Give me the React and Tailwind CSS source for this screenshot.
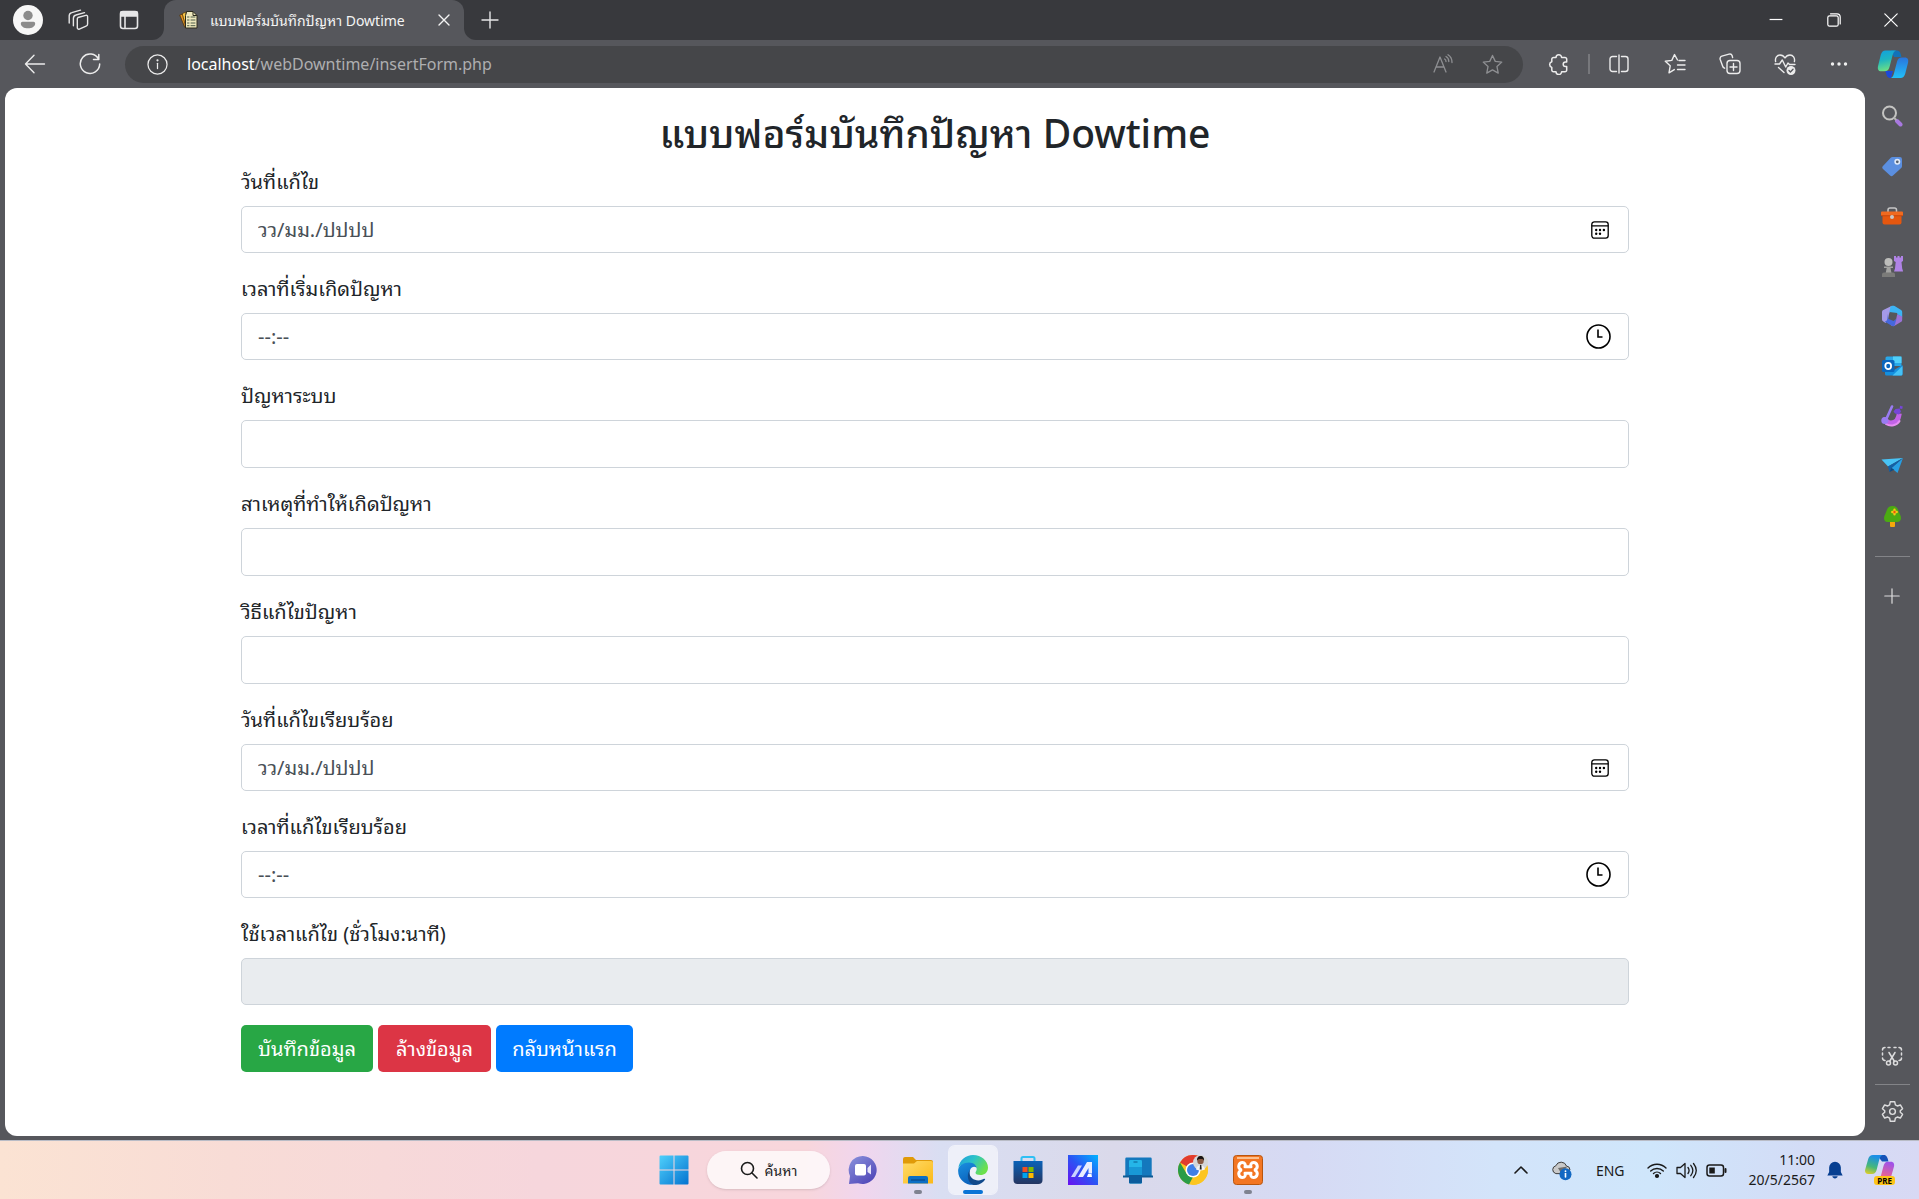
import React from "react";

const UI = "font-['Noto_Sans','Noto_Sans_Thai_Looped','Loma','Noto_Sans_Thai','Liberation_Sans',sans-serif]";

function Svg({ size = 24, box = "0 0 24 24", className = "", children, sw = 1.3 }) {
  return (
    <svg
      width={size}
      height={size}
      viewBox={box}
      fill="none"
      stroke="currentColor"
      strokeWidth={sw}
      strokeLinecap="round"
      strokeLinejoin="round"
      aria-hidden="true"
      className={"shrink-0 " + className}
    >
      {children}
    </svg>
  );
}

function IconButton({ label, className = "", children }) {
  return (
    <button type="button" aria-label={label} className={"flex shrink-0 items-center justify-center " + className}>
      {children}
    </button>
  );
}

/* ---------- title bar ---------- */

function NotesIcon() {
  return (
    <Svg size={20} box="0 0 20 20" sw={1}>
      <path d="M1 5 4 4l4 12-2 1z" fill="#e8961e" stroke="#5a3c10" strokeWidth=".8" />
      <path d="M3.500 3.500 7 2l2 13-2 1z" fill="#f7c84a" stroke="#5a3c10" strokeWidth=".8" />
      <path d="M8 1.500h6l4 4V18H6.500V6z" fill="#efe9bd" stroke="#2c2a1c" />
      <path d="M8.500 7h1.500M12 7h4M8.500 10h1.500M12 10h4M8.500 13h1.500M12 13h4M8.500 15.700h1.500M12 15.700h4" stroke="#4c5a48" />
      <path d="M14 2v3.500h3.500" stroke="#2c2a1c" />
    </Svg>
  );
}

function TitleBar() {
  return (
    <header className="flex h-10 items-stretch bg-[#38393d] text-[#e6e6e7]">
      <div className="flex w-[164px] shrink-0 items-center bg-[#56575c]">
        <div className="flex h-10 w-full items-center rounded-br-xl bg-[#38393d] pl-[13px]">
          <IconButton label="โปรไฟล์">
            <Svg size={30} box="0 0 30 30">
              <circle cx="15" cy="15" r="15" fill="#f7f7f7" stroke="none" />
              <circle cx="15" cy="10.500" r="4.700" fill="#8c8c8c" stroke="none" />
              <path d="M9.500 16.700h11a1.700 1.700 0 0 1 1.700 1.700c0 3-3.200 4.900-7.200 4.900s-7.200-1.900-7.200-4.900a1.700 1.700 0 0 1 1.700-1.700z" fill="#8c8c8c" stroke="none" />
            </Svg>
          </IconButton>
          <IconButton label="พื้นที่ทำงาน" className="ml-6">
            <Svg size={22} box="0 0 22 22" sw={1.4}>
              <path d="m11 8.500 7.800-2.200a1.400 1.400 0 0 1 1.800 1.400v7.300a2.200 2.200 0 0 1-1.500 2.100l-6.800 3a1.400 1.400 0 0 1-2-1.300v-8.200a2.200 2.200 0 0 1 .7-2.100z" />
              <path d="M17.500 3.600 9 6a3.400 3.400 0 0 0-2.600 3.200v7.500" />
              <path d="M13.500 1.200 4.800 3.600a3.400 3.400 0 0 0-2.600 3.200V14" />
            </Svg>
          </IconButton>
          <IconButton label="เมนูการทำงานของแท็บ" className="ml-[30px]">
            <Svg size={20} box="0 0 20 20" sw={1.6}>
              <rect x="1.500" y="1.500" width="17" height="17" rx="2.500" />
              <path d="M2 2h16v4H2z" fill="currentColor" />
              <path d="M6 6v12" />
            </Svg>
          </IconButton>
        </div>
      </div>
      <div className="flex w-[300px] shrink-0 bg-[#38393d]">
        <div className="flex w-full items-center rounded-t-xl bg-[#56575c] pr-[12px] pl-[15px] text-[#f4f4f4]">
          <NotesIcon />
          <span className="ml-[11px] flex-1 text-[14px] whitespace-nowrap">แบบฟอร์มบันทึกปัญหา Dowtime</span>
          <IconButton label="ปิดแท็บ">
            <Svg size={16} box="0 0 16 16" sw={1.400}>
              <path d="m3 3 10 10M13 3 3 13" />
            </Svg>
          </IconButton>
        </div>
      </div>
      <div className="flex flex-1 bg-[#56575c]">
        <div className="flex flex-1 items-center rounded-bl-xl bg-[#38393d] pl-[17px]">
          <IconButton label="แท็บใหม่">
            <Svg size={18} box="0 0 18 18" sw={1.4}>
              <path d="M9 1v16M1 9h16" />
            </Svg>
          </IconButton>
          <div className="ml-auto flex text-white">
            <IconButton label="ย่อ" className="w-[58px]">
              <Svg size={14} box="0 0 14 14" sw={1.2}>
                <path d="M.6 6.500h12.800" strokeLinecap="butt" />
              </Svg>
            </IconButton>
            <IconButton label="คืนค่า" className="w-[57px]">
              <Svg size={14} box="0 0 14 14" sw={1.2}>
                <rect x=".8" y="2.800" width="10.400" height="10.400" rx="1.800" />
                <path d="M3.500.8H10A3.200 3.200 0 0 1 13.200 4v7" />
              </Svg>
            </IconButton>
            <IconButton label="ปิด" className="w-[57px]">
              <Svg size={14} box="0 0 14 14" sw={1.2}>
                <path d="m.8.8 12.400 12.400M13.200.8.8 13.200" />
              </Svg>
            </IconButton>
          </div>
        </div>
      </div>
    </header>
  );
}

/* ---------- toolbar ---------- */

function CopilotIcon() {
  return (
    <svg width="32" height="28" viewBox="0 0 32 28" aria-hidden="true">
      <defs>
        <linearGradient id="cpA" x1="0" y1="0" x2="0.200" y2="1">
          <stop offset="0" stopColor="#11a0e0" />
          <stop offset=".5" stopColor="#1fb5c0" />
          <stop offset="1" stopColor="#6ade86" />
        </linearGradient>
        <linearGradient id="cpB" x1="0" y1="0" x2="0" y2="1">
          <stop offset="0" stopColor="#2a74dc" />
          <stop offset="1" stopColor="#22c0f8" />
        </linearGradient>
      </defs>
      <path d="M14 0.500h6c2.600 0 3.800 2.800 4.400 6.500H17z" fill="#1272b8" />
      <path d="M8 21h8l-2 7c-3.500 0-4.200-2-4.800-4.300C8.800 22.100 8.600 21.500 8 21z" fill="#1c49d8" />
      <path d="M8.500.5H19c-2 .7-2.800 2.400-3.400 4.800L12.500 17c-.9 3-2.200 4.300-5 4.300H4.200C1.300 21.300.4 19 1 16.200L3.800 4.800C4.700 2 6.200.5 8.500.5z" fill="url(#cpA)" />
      <path d="M23.500 28H13.800c2-.7 2.500-2.400 3.200-4.800l3-11.500c.9-3 2.200-4.300 5-4.300h2.800c3 0 3.900 2.300 3.300 5l-2.900 11.300c-.8 2.800-2.300 4.300-4.700 4.300z" fill="url(#cpB)" />
    </svg>
  );
}

function Toolbar() {
  return (
    <nav className="flex h-12 items-center bg-[#56575c] text-[#ececec]">
      <IconButton label="ย้อนกลับ" className="ml-[12px] w-[46px]">
        <Svg size={22} box="0 0 22 22" sw={1.4}>
          <path d="M20.500 11H1.500M10 2.200 1.500 11l8.500 8.800" />
        </Svg>
      </IconButton>
      <IconButton label="รีเฟรช" className="mr-[12px] ml-[9px] w-[46px]">
        <Svg size={22} box="0 0 22 22" sw={1.5}>
          <path d="M19.600 6.200A9.700 9.700 0 1 0 20.700 11M19.800 1.400v5.200h-5.300" />
        </Svg>
      </IconButton>
      <div className="flex h-[37px] flex-1 items-center rounded-full bg-[#454649] pr-[20px] pl-[22px]">
        <Svg size={21} box="0 0 22 22" sw={1.3}>
          <circle cx="11" cy="11" r="10" />
          <path d="M11 9.800v5.500" />
          <circle cx="11" cy="6.600" r=".5" fill="currentColor" />
        </Svg>
        <a href="#address" className="ml-[19px] flex-1 text-[16px] text-[#aeaeb0]">
          <span className="text-white">localhost</span>/webDowntime/insertForm.php
        </a>
        <IconButton label="อ่านออกเสียง" className="mr-[29px] text-[#8e8f92]">
          <Svg size={20} box="0 0 20 20" sw={1.3}>
            <path d="M1 18 7 3l6 15M3 13h8" />
            <path d="M13 2.500c2 1.200 2.800 3 2.800 5M15 .8c3 1.800 4 4.700 4 7.700M11.600 5c1 .6 1.400 1.500 1.400 2.600" />
          </Svg>
        </IconButton>
        <IconButton label="เพิ่มในรายการโปรด" className="text-[#8e8f92]">
          <Svg size={21} box="0 0 22 22" sw={1.4}>
            <path d="m11 1.500 2.900 6.200 6.800.8-5 4.700 1.300 6.800-6-3.300L5 20l1.300-6.800-5-4.700 6.800-.8z" />
          </Svg>
        </IconButton>
      </div>
      <div className="flex items-center">
        <IconButton label="ส่วนขยาย" className="ml-[8px] w-[56px]">
          <Svg size={22} box="0 0 22 22" sw={1.5}>
            <path d="M8 4.500a2.800 2.800 0 0 1 5.600 0H17a1.700 1.700 0 0 1 1.700 1.700V9h-1.200a2.200 2.200 0 0 0 0 4.600h1.200V17a1.700 1.700 0 0 1-1.700 1.700h-3.400a2.800 2.800 0 0 1-5.600 0H5.500A1.700 1.700 0 0 1 3.800 17v-2.600a2.900 2.900 0 0 1 0-5.600V6.200a1.700 1.700 0 0 1 1.700-1.700z" />
          </Svg>
        </IconButton>
        <span className="mx-[1px] h-5 w-[2px] bg-[#77787c]" />
        <IconButton label="แยกหน้าจอ" className="w-[56px]">
          <Svg size={20} box="0 0 20 20" sw={1.4}>
            <path d="M7.500 2.500H3.500A2.500 2.500 0 0 0 1 5v10a2.500 2.500 0 0 0 2.500 2.500h4M12.500 2.500h4A2.500 2.500 0 0 1 19 5v10a2.500 2.500 0 0 1-2.500 2.500h-4M10 1v18" />
          </Svg>
        </IconButton>
        <IconButton label="รายการโปรด" className="w-[55px]">
          <Svg size={22} box="0 0 22 22" sw={1.4}>
            <path d="M13.500 7 10.500 1.500 7.800 7.400l-6.500.9 4.900 4.500L5 19.800l5.300-3.200M15 7.500h6M13.500 12h7.500M13.500 16.500h7.500" />
          </Svg>
        </IconButton>
        <IconButton label="คอลเลกชัน" className="w-[55px]">
          <Svg size={22} box="0 0 22 22" sw={1.4}>
            <rect x="8" y="7.500" width="13" height="13" rx="3" />
            <path d="M14.500 10.500v7M11 14h7M5.600 15.200a3 3 0 0 1-2-2.200L1.200 6.500a2.600 2.600 0 0 1 1.700-3.300L10 1.200a2.600 2.600 0 0 1 3.200 1.600l.4 1.700" />
          </Svg>
        </IconButton>
        <IconButton label="สิ่งจำเป็นของเบราว์เซอร์" className="w-[55px]">
          <Svg size={22} box="0 0 22 22" sw={1.4}>
            <path d="M1.600 8.500C.8 5 3 2 6 2c2.200 0 3.800 1 5 3 1.200-2 2.800-3 5-3 3 0 5.200 3 4.400 6.500M1 11h4.500l2.800-4 3.400 7 2.300-4 1.500 1.500H21M4.500 14.500l5.500 5" />
            <circle cx="17" cy="17.500" r="4.500" fill="currentColor" stroke="none" />
            <path d="m15 17.600 1.400 1.300 2.600-2.700" stroke="#56575c" />
          </Svg>
        </IconButton>
        <IconButton label="การตั้งค่าและอื่นๆ" className="w-[54px]">
          <svg width="18" height="6" viewBox="0 0 18 6" fill="#f0f0f0" aria-hidden="true">
            <circle cx="2.500" cy="3" r="1.700" />
            <circle cx="9" cy="3" r="1.700" />
            <circle cx="15.500" cy="3" r="1.700" />
          </svg>
        </IconButton>
        <IconButton label="Copilot" className="w-[53px]">
          <CopilotIcon />
        </IconButton>
      </div>
    </nav>
  );
}

/* ---------- form ---------- */

function CalendarIcon() {
  return (
    <Svg size={18} box="0 0 18 18" className="mr-[3px]" sw={1.3}>
      <rect x=".8" y=".8" width="16.400" height="16.400" rx="2.600" />
      <path d="M1 4.800h16" />
      <g fill="currentColor" stroke="none">
        <circle cx="5.200" cy="9" r="1.200" />
        <circle cx="9" cy="9" r="1.200" />
        <circle cx="12.900" cy="9" r="1.200" />
        <circle cx="5.200" cy="12.700" r="1.200" />
        <circle cx="9" cy="12.700" r="1.200" />
      </g>
    </Svg>
  );
}

function ClockIcon() {
  return (
    <Svg size={25} box="0 0 25 25" className="mr-[1px]" sw={1.6}>
      <circle cx="12.500" cy="12.500" r="11.500" />
      <path d="M12 5.500V13h4.500" strokeLinecap="butt" strokeLinejoin="miter" />
    </Svg>
  );
}

const FIELDS = [
  { id: "fixDate", label: "วันที่แก้ไข", kind: "date" },
  { id: "startTime", label: "เวลาที่เริ่มเกิดปัญหา", kind: "time" },
  { id: "problem", label: "ปัญหาระบบ", kind: "text" },
  { id: "cause", label: "สาเหตุที่ทำให้เกิดปัญหา", kind: "text" },
  { id: "solution", label: "วิธีแก้ไขปัญหา", kind: "text" },
  { id: "doneDate", label: "วันที่แก้ไขเรียบร้อย", kind: "date" },
  { id: "doneTime", label: "เวลาที่แก้ไขเรียบร้อย", kind: "time" },
  { id: "duration", label: "ใช้เวลาแก้ไข (ชั่วโมง:นาที)", kind: "readonly" },
];

const BOX = {
  date: "h-[47px] bg-white",
  time: "h-[47px] bg-white",
  text: "h-12 bg-white",
  readonly: "h-[47px] bg-[#e9ecef]",
};

const HINT = { date: "วว/มม./ปปปป", time: "--:--" };

function Field({ id, label, kind }) {
  return (
    <div className="mb-5">
      <label htmlFor={id} className="mb-[10px] block h-[30px] text-[20px] leading-[32px] text-[#212529]">
        {label}
      </label>
      <div className={"flex items-center rounded-[5px] border border-[#ced4da] pr-4 pl-4 text-black " + BOX[kind]}>
        <input
          id={id}
          type="text"
          placeholder={HINT[kind]}
          readOnly={kind === "readonly"}
          className="h-full min-w-0 flex-1 bg-transparent text-[20px] text-[#495057] outline-none placeholder:text-[#495057]"
        />
        {kind === "date" && (
          <IconButton label={"เลือกวันที่: " + label}>
            <CalendarIcon />
          </IconButton>
        )}
        {kind === "time" && (
          <IconButton label={"เลือกเวลา: " + label}>
            <ClockIcon />
          </IconButton>
        )}
      </div>
    </div>
  );
}

function DowntimeForm() {
  return (
    <main className="flex-1 rounded-xl bg-white pt-[20px] pb-[40px]">
      <form className="mx-auto w-full max-w-[1388px]" onSubmit={(e) => e.preventDefault()}>
        <h1 className="mb-[10px] h-12 text-center text-[39px] leading-[50px] font-medium text-[#212529]">
          แบบฟอร์มบันทึกปัญหา Dowtime
        </h1>
        {FIELDS.map((f) => (
          <Field key={f.id} {...f} />
        ))}
        <div className="flex gap-[5px] text-[20px] text-white">
          <button type="submit" className="h-[47px] w-[132px] rounded-[5px] bg-[#28a745]">
            บันทึกข้อมูล
          </button>
          <button type="reset" className="h-[47px] w-[113px] rounded-[5px] bg-[#dc3545]">
            ล้างข้อมูล
          </button>
          <a href="#home" className="flex h-[47px] w-[137px] items-center justify-center rounded-[5px] bg-[#007bff]">
            กลับหน้าแรก
          </a>
        </div>
      </form>
    </main>
  );
}

/* ---------- side bar ---------- */

const SIDE = [
  [
    "ค้นหา",
    <>
      <circle cx="8.500" cy="8" r="6.500" stroke="#c4c4c2" strokeWidth="2" />
      <path d="m16 16 3.500 3.500" stroke="#a878e0" strokeWidth="4" />
      <path d="m13.300 13 1.500 1.500" stroke="#b4b4b4" strokeWidth="2" />
    </>,
  ],
  [
    "ช้อปปิ้ง",
    <>
      <path d="M11.500 2h7.300A2.200 2.200 0 0 1 21 4.200v7a2.500 2.500 0 0 1-.8 1.800L12 20.500a2 2 0 0 1-2.900 0L2 14a2 2 0 0 1 0-2.900l7.700-8.300A2.500 2.500 0 0 1 11.500 2z" fill="#5b8fe0" stroke="none" />
      <circle cx="16.300" cy="6.800" r="2.200" stroke="#dfe9f8" strokeWidth="1.600" fill="#55606e" />
    </>,
  ],
  [
    "เครื่องมือ",
    <>
      <path d="M7 7V5a2 2 0 0 1 2-2h4.500a2 2 0 0 1 2 2v2" stroke="#c6c6c6" strokeWidth="1.500" />
      <path d="M1.500 9h19v8.500a2 2 0 0 1-2 2h-15a2 2 0 0 1-2-2z" fill="#e5570f" stroke="none" />
      <path d="M1 6.500h20a1 1 0 0 1 1 1V11H0V7.500a1 1 0 0 1 1-1z" fill="#f06a20" stroke="none" />
      <path d="M0 10.700h22" stroke="#b53a06" strokeWidth=".7" />
      <circle cx="11" cy="12" r="2" fill="#c8c8c8" stroke="none" />
    </>,
  ],
  [
    "เกม",
    <>
      <path d="M13 1h2v1.500h1.500V1h2v1.500H20V1h2v5l-1.500 1 .7 6.500 1 3H13l1-3 .7-6.500L13 6z" fill="#b083e6" stroke="none" />
      <circle cx="7.500" cy="7" r="4" fill="#bdbdbb" stroke="none" />
      <path d="M3 11.500h9v1.500H9.500l1 5H4.700l1-5H3z" fill="#a3a3a1" stroke="none" />
      <path d="M1 19.500a2 2 0 0 1 2-2h9a2 2 0 0 1 2 2V22H1z" fill="#7b7b79" stroke="none" />
    </>,
  ],
  [
    "Microsoft 365",
    <>
      <path d="M11 .8 8 9 7 14.500 4.500 18 2.300 16.600A2.500 2.500 0 0 1 1 14.500V7.300c0-1 .5-1.800 1.300-2.200z" fill="#a59ae8" stroke="none" />
      <path d="m9.500 1.600 1.200-.6c1-.5 2-.4 2.900.1l6.100 3.700c1 .6 1.500 1.400 1.500 2.500v5l-5-3V8L8.500 7z" fill="#3cb4f4" stroke="none" />
      <path d="M21.200 11.500v3.200c0 1-.5 1.900-1.400 2.400l-6.200 3.700c-1 .6-2 .6-3 0l-.8-.5 5.400-6.300 1-4.700z" fill="#9a72d8" stroke="none" />
      <path d="m7 8.500.2 5.300 5.300 2.200 3-2-2 6.800c-1 .5-2 .4-2.900-.1l-7-4.200c1.500 0 2.500-1 2.700-2.500z" fill="#4668dc" stroke="none" />
    </>,
  ],
  [
    "Outlook",
    <>
      <path d="M6 1.500h13a1.500 1.500 0 0 1 1.500 1.500v8H4.500V3A1.500 1.500 0 0 1 6 1.500z" fill="#28a8ea" stroke="none" />
      <path d="M12 1.500h8.500V8H12z" fill="#50d0fa" stroke="none" />
      <path d="m4 10 9 5 8.500-5v9a1.500 1.500 0 0 1-1.500 1.500H5.500A1.500 1.500 0 0 1 4 19z" fill="#1490df" stroke="none" />
      <path d="m21.500 11-10 9.500H20a1.500 1.500 0 0 0 1.500-1.500z" fill="#45c2f6" stroke="none" />
      <rect x="1" y="5" width="12.500" height="12" rx="1.500" fill="#0a66bd" stroke="none" />
      <ellipse cx="7.200" cy="11" rx="2.900" ry="3.100" stroke="#fff" strokeWidth="1.800" />
    </>,
  ],
  [
    "Designer",
    <>
      <path d="M4 12.500c.5 4 3 5.500 6 5.500 4.500 0 7.500-3 8.300-9.500" stroke="#c263e8" strokeWidth="5" strokeLinecap="butt" />
      <path d="M5 19c4.500 3 11 1.500 13.500-3" stroke="#e78df2" strokeWidth="2" />
      <path d="m11 1.500-5 11" stroke="#9a7cf2" strokeWidth="2.600" />
      <circle cx="3.800" cy="15.500" r="3.500" fill="#9a7cf2" stroke="none" />
      <path d="m14.500 4 4-.5 1.500 3-2 3-4-1-1.500-2zM19 .8l2.800.7-.6 2.500-2.500-.5z" fill="#7646d8" stroke="none" />
    </>,
  ],
  [
    "Drop",
    <>
      <path d="M.5 4.500 22 3 7 11.500z" fill="#48c4f6" stroke="none" />
      <path d="m22 3-5.500 15-6-5z" fill="#279fe4" stroke="none" />
      <path d="m22 3-15 8.500L8.500 17l2-4z" fill="#1160a8" stroke="none" />
      <path d="m8.500 17 2-4 2.700 1.800z" fill="#0b4a86" stroke="none" />
    </>,
  ],
  [
    "ต้นไม้",
    <>
      <path d="M9 15h5v6a1 1 0 0 1-1 1h-3a1 1 0 0 1-1-1z" fill="#f5a80c" stroke="none" />
      <path d="M11.500 1c3.500 0 5 2 6 5s2.500 4.500 2.500 7-1.500 4-4 4H6.500c-2.500 0-3.500-2-3.500-4s1.500-4 2.500-7 2.500-5 6-5z" fill="#4bab12" stroke="none" />
      <path d="M13.500 4.800v4.400M11.300 7h4.400" stroke="#f7c815" strokeWidth="2.400" />
      <circle cx="13.500" cy="7" r="1.200" fill="#e8530e" stroke="none" />
    </>,
  ],
];

function SideBar() {
  return (
    <aside className="flex w-[54px] shrink-0 flex-col items-center bg-[#56575c] pt-[3px] text-[#dcdcdd]">
      {SIDE.map(([name, art]) => (
        <IconButton key={name} label={name} className="h-[50px] w-full">
          <Svg size={22} box="0 0 22 22">
            {art}
          </Svg>
        </IconButton>
      ))}
      <span className="mt-[15px] h-px w-[35px] bg-[#838488]" />
      <IconButton label="ปรับแต่งแถบด้านข้าง" className="mt-[14px] h-[50px] w-full">
        <Svg size={16} box="0 0 16 16" sw={1.2}>
          <path d="M8 .8v14.400M.8 8h14.400" />
        </Svg>
      </IconButton>
      <IconButton label="สกรีนช็อต" className="mt-auto h-[50px] w-full">
        <Svg size={22} box="0 0 22 22" sw={1.5}>
          <path d="M4 15.500c-1.700 0-2.500-1-2.500-2.500M1.500 10V8M1.500 5c0-1.500 1-2.500 2.500-2.500M7 2.500h2M13 2.500h2M18 2.500c1.500 0 2.500 1 2.500 2.500M20.500 8v2M20.500 13c0 1.500-1 2.500-2.500 2.500" />
          <path d="m8 7.500 5.500 9M14 7.500l-5.500 9" />
          <circle cx="7.500" cy="18" r="2" />
          <circle cx="14.500" cy="18" r="2" />
        </Svg>
      </IconButton>
      <span className="mt-[3px] h-px w-[35px] bg-[#838488]" />
      <IconButton label="การตั้งค่า" className="mt-px h-[50px] w-full">
        <Svg size={23} box="0 0 24 24" sw={1.5}>
          <path d="M9.700 1.800h4.600l.7 3.300 2 1.100 3.200-1 2.300 3.900-2.400 2.200v1.400l2.400 2.200-2.300 3.900-3.200-1-2 1.100-.7 3.300H9.700L9 18.900l-2-1.100-3.200 1-2.300-3.900 2.400-2.200v-1.400L1.500 9.100l2.300-3.900 3.200 1 2-1.100z" />
          <circle cx="12" cy="12" r="3" />
        </Svg>
      </IconButton>
    </aside>
  );
}

/* ---------- task bar ---------- */

function App30({ children }) {
  return (
    <svg width="30" height="30" viewBox="0 0 30 30" fill="none" aria-hidden="true">
      {children}
    </svg>
  );
}

function TaskButton({ label, state, children }) {
  return (
    <button type="button" aria-label={label} className="flex w-[55px] justify-center">
      <span
        className={
          "relative flex h-12 w-12 items-center justify-center rounded-md " +
          (state === "active" ? "bg-white/55 ring-1 ring-white/60" : "")
        }
      >
        {children}
        {state === "active" && <span className="absolute bottom-0 h-1 w-5 rounded-full bg-[#0a74d6]" />}
        {state === "open" && <span className="absolute bottom-0 h-1 w-2 rounded-full bg-[#7f8290]" />}
      </span>
    </button>
  );
}

function StartIcon() {
  return (
    <App30>
      <defs>
        <linearGradient id="win" x1="0" y1="0" x2="1" y2="1">
          <stop offset="0" stopColor="#4fd0fb" />
          <stop offset="1" stopColor="#0473d0" />
        </linearGradient>
      </defs>
      <path d="M1.500.5H14.500V14.500H.5V1.500a1 1 0 0 1 1-1zM15.500.5h13a1 1 0 0 1 1 1v13h-14zM.5 15.500h14v14h-13a1 1 0 0 1-1-1zM15.500 15.500h14v13a1 1 0 0 1-1 1h-13z" fill="url(#win)" />
    </App30>
  );
}

function ChatIcon() {
  return (
    <App30>
      <defs>
        <linearGradient id="chat" x1="0" y1="0" x2="0.800" y2="1">
          <stop offset="0" stopColor="#8b93dc" />
          <stop offset="1" stopColor="#4f46b8" />
        </linearGradient>
      </defs>
      <path d="M15 1a14 14 0 1 1-5 27.200L1 29l1-8A14 14 0 0 1 15 1z" fill="url(#chat)" />
      <rect x="7" y="9" width="11" height="11.500" rx="2" fill="#fff" />
      <path d="m19.500 13 3.500-3.500v10L19.500 17z" fill="#e6e4fa" />
    </App30>
  );
}

function FolderIcon() {
  return (
    <App30>
      <defs>
        <linearGradient id="fold" x1="0" y1="0" x2="1" y2="1">
          <stop offset="0" stopColor="#ffdb6a" />
          <stop offset="1" stopColor="#fbb917" />
        </linearGradient>
      </defs>
      <path d="M0 4a2 2 0 0 1 2-2h8l3 3h15a2 2 0 0 1 2 2v6H0z" fill="#e09a08" />
      <path d="M0 8.500h11L14 6h14a2 2 0 0 1 2 2v20.500H0z" fill="url(#fold)" />
      <path d="M5 28.500V23a2 2 0 0 1 2-2h16a2 2 0 0 1 2 2v5.500z" fill="#0c6fc4" />
      <path d="M8 25h14" stroke="#0a4f95" strokeWidth="1.500" />
    </App30>
  );
}

function EdgeIcon() {
  return (
    <App30>
      <defs>
        <linearGradient id="edA" x1="0" y1="0" x2="1" y2="0.500">
          <stop offset="0" stopColor="#1f9be0" />
          <stop offset=".5" stopColor="#2cc3c8" />
          <stop offset="1" stopColor="#6ce04c" />
        </linearGradient>
        <linearGradient id="edB" x1="0" y1="0" x2="0.400" y2="1">
          <stop offset="0" stopColor="#1a90e0" />
          <stop offset="1" stopColor="#0b62bc" />
        </linearGradient>
      </defs>
      <path d="M.3 13C1.500 5 8 0 15 0c8.500 0 15 6 15 12.500 0 5-3.500 7.500-7.500 7.500-3 0-5-1-5-2.300 0-1 1.200-1.500 1.200-3.700 0-3-3-5.500-7-5.500C6.500 8.500 2 10 .3 13z" fill="url(#edA)" />
      <path d="M.2 14.500C1 10.500 5.500 7.500 11 7.500c4.500 0 7.700 2.800 7.700 6 0-2-5-3-6.700 1.500-2 6 3 13.500 6 14.500C9 31.500-.8 25 .2 14.500z" fill="url(#edB)" />
      <path d="M12.300 14.500c-3 5.500 2.200 11 8 11 2.500 0 4.500-1 5.700-1.700.7-.4 1.500.3 1 1C24.500 28.500 20 30.500 15.500 30 9.500 28 8 19 12.300 14.500z" fill="#114a8b" />
    </App30>
  );
}

function StoreIcon() {
  return (
    <App30>
      <defs>
        <linearGradient id="store" x1="0" y1="0" x2="0" y2="1">
          <stop offset="0" stopColor="#0a62b8" />
          <stop offset="1" stopColor="#253560" />
        </linearGradient>
      </defs>
      <path d="M8.500 7V3.500a1.500 1.500 0 0 1 1.500-1.500h10a1.500 1.500 0 0 1 1.500 1.500V7" stroke="#2fc0f4" strokeWidth="2" />
      <path d="M.5 6h29v19a4 4 0 0 1-4 4h-21a4 4 0 0 1-4-4z" fill="url(#store)" />
      <path d="M9.500 12h5v5h-5z" fill="#f25022" />
      <path d="M15.500 12h5v5h-5z" fill="#7fba00" />
      <path d="M9.500 18h5v5h-5z" fill="#00a4ef" />
      <path d="M15.500 18h5v5h-5z" fill="#ffb900" />
    </App30>
  );
}

function MyAsusIcon() {
  return (
    <App30>
      <defs>
        <linearGradient id="asus" x1="1" y1="0" x2="0" y2="1">
          <stop offset="0" stopColor="#00b4ff" />
          <stop offset=".5" stopColor="#2b54f4" />
          <stop offset="1" stopColor="#6a10f0" />
        </linearGradient>
      </defs>
      <path d="M0 0h30v30H0z" fill="url(#asus)" />
      <path d="M3 22 10 10.500h4L7 22z" fill="#c9d2ff" />
      <path d="m10 22 9-15h5v11.500h-3.500V13L15 22z" fill="#eaeeff" />
      <path d="M20 19h3.500l.5 3h-5z" fill="#fff" />
    </App30>
  );
}

function PhoneLinkIcon() {
  return (
    <App30>
      <path d="M3.500 2.500h24a1.200 1.200 0 0 1 1.200 1.200V21H2.300V3.700a1.200 1.200 0 0 1 1.200-1.200z" fill="#1478bd" />
      <path d="M0 20.500h30v2H0z" fill="#0d5a94" />
      <rect x="6" y="5" width="13" height="23.500" rx="1.200" fill="#25b5e8" />
      <path d="M6 20h13v7.300a1.200 1.200 0 0 1-1.200 1.200H7.200A1.200 1.200 0 0 1 6 27.300z" fill="#0c5c9c" />
      <path d="M6 12h13v8H6z" fill="#1898d6" />
      <path d="M10.500 7h4" stroke="#0b5c90" />
    </App30>
  );
}

function ChromeIcon() {
  return (
    <App30>
      <circle cx="15" cy="15" r="15" fill="#fcc520" />
      <path d="M15 15 2 7.500A15 15 0 0 1 28 7.500H15z" fill="#e23b2e" />
      <path d="M2 7.500 8.500 18.500 15 22l-4 7.500A15 15 0 0 1 2 7.500z" fill="#2a9c48" />
      <path d="M15 30 21.500 18.500 21 8h7.200A15 15 0 0 1 15 30z" fill="#fcc520" />
      <circle cx="15" cy="15" r="7.500" fill="#fff" />
      <circle cx="15" cy="15" r="6" fill="#3f7fe8" />
      <circle cx="22.500" cy="7.500" r="7.500" fill="#d4d6d8" />
      <path d="M18 14.500c.5-3 2-4 4.500-4s4 1 4.500 4c-3 1.300-6 1.300-9 0z" fill="#f2f2f2" />
      <circle cx="22.500" cy="6" r="3.200" fill="#8a5a42" />
      <path d="M19 6c-.4-3 1-5 3.500-5S26.500 3 26 6c-.7-1.700-1-2-3.500-2S19.700 4.500 19 6z" fill="#1a1413" />
      <path d="M22 10h1.300l.4 4.500h-2z" fill="#222" />
    </App30>
  );
}

function XamppIcon() {
  return (
    <App30>
      <rect x=".5" y=".5" width="29" height="29" rx="3" fill="#f37623" stroke="#b8560f" />
      <path d="M4 3h22" stroke="#fbc08e" strokeWidth="2" />
      <path
        d="M12 11.800h6M12 18.200h6M12 11.800c1-2.500-.5-4.300-2.500-4.300a3.700 3.700 0 0 0-1.700 7v1a3.700 3.700 0 0 0 1.700 7c2 0 3.500-1.800 2.500-4.300M18 11.800c-1-2.500.5-4.300 2.500-4.300a3.700 3.700 0 0 1 1.700 7v1a3.700 3.700 0 0 1-1.700 7c-2 0-3.500-1.800-2.500-4.300"
        stroke="#fff"
        strokeWidth="3"
        strokeLinejoin="round"
        strokeLinecap="round"
      />
    </App30>
  );
}

function PreIcon() {
  return (
    <span className="relative block h-[30px] w-[30px]">
      <svg width="30" height="26" viewBox="0 0 30 26" aria-hidden="true">
        <defs>
          <linearGradient id="preA" x1="0.300" y1="0" x2="0" y2="1">
            <stop offset="0" stopColor="#1b8fe6" />
            <stop offset=".55" stopColor="#48b878" />
            <stop offset="1" stopColor="#f0d020" />
          </linearGradient>
          <linearGradient id="preB" x1="0.500" y1="0" x2="0.200" y2="1">
            <stop offset="0" stopColor="#a052e8" />
            <stop offset="1" stopColor="#ff6a78" />
          </linearGradient>
        </defs>
        <path d="M12 0h7c2.500 0 3.600 2.500 4.400 6.500H17z" fill="#1552b8" />
        <path d="M8 0h9.500c-2 .8-2.600 2.300-3.200 4.600L11.600 15c-.9 2.900-2 4-4.600 4H3.200C.5 19-.4 17 .2 14.400L3.200 4C4 1.400 5.600 0 8 0z" fill="url(#preA)" />
        <path d="M22 25h-9c2-.7 2.300-2.200 3-4.500L18.500 11c.8-2.800 2-4.300 4.600-4.300H26c2.700 0 3.600 2.300 3 4.800L26.300 21c-.8 2.600-2 4-4.300 4z" fill="url(#preB)" />
      </svg>
      <span className="absolute right-0 bottom-0 rounded-[3px] bg-[#fcc419] px-[3px] text-[8px] leading-[9px] font-bold text-black">
        PRE
      </span>
    </span>
  );
}

function TaskBar() {
  return (
    <footer className="border-t border-[#b9bcc6] bg-[linear-gradient(90deg,#fbe3d3_0%,#f8dcd6_12%,#f6d6dc_28%,#f8d6dc_42%,#f0d6ee_45%,#d9def2_49%,#dad9ea_58%,#d6daf4_68%,#d3e4fa_78%,#cfe6fb_86%,#d3dcf6_94%,#d8d9f4_100%)]">
      <div className="grid h-[58px] grid-cols-[1fr_auto_1fr] items-center">
        <span />
        <div className="flex items-center pl-[2px]">
          <TaskButton label="เริ่ม">
            <StartIcon />
          </TaskButton>
          <button
            type="button"
            className="mr-[5px] ml-[6px] flex h-[38px] w-[123px] items-center justify-center gap-[7px] rounded-full bg-white/75 text-[14px] text-[#1b1b1b] shadow-sm"
          >
            <Svg size={18} box="0 0 18 18" sw={1.6}>
              <circle cx="7.500" cy="7.500" r="6" />
              <path d="m12 12 5 5" />
            </Svg>
            ค้นหา
          </button>
          <TaskButton label="แชท">
            <ChatIcon />
          </TaskButton>
          <TaskButton label="File Explorer" state="open">
            <FolderIcon />
          </TaskButton>
          <TaskButton label="Microsoft Edge" state="active">
            <EdgeIcon />
          </TaskButton>
          <TaskButton label="Microsoft Store">
            <StoreIcon />
          </TaskButton>
          <TaskButton label="MyASUS">
            <MyAsusIcon />
          </TaskButton>
          <TaskButton label="Phone Link">
            <PhoneLinkIcon />
          </TaskButton>
          <TaskButton label="Google Chrome">
            <ChromeIcon />
          </TaskButton>
          <TaskButton label="XAMPP" state="open">
            <XamppIcon />
          </TaskButton>
        </div>
        <div className="flex items-center justify-end pr-[24px] text-[#1a1a1a]">
          <IconButton label="แสดงไอคอนที่ซ่อน" className="mr-[23px]">
            <Svg size={14} box="0 0 14 14" sw={1.6}>
              <path d="m1 10 6-6 6 6" />
            </Svg>
          </IconButton>
          <IconButton label="OneDrive" className="mr-[24px]">
            <Svg size={21} box="0 0 21 21">
              <path d="M4.500 13.500a4 4 0 0 1 .3-7.700A5.700 5.700 0 0 1 15.500 6a4 4 0 0 1 3.500 4l-6 3.500z" fill="#c9c9c9" stroke="#3c3c3c" strokeWidth="1" />
              <path d="m7 8 9.500-1.500L10 13z" fill="#6c6c6c" stroke="none" />
              <circle cx="14.500" cy="14.200" r="6" fill="#1268c3" stroke="none" />
              <path d="M14.500 13.500v3.500" stroke="#fff" strokeWidth="1.600" />
              <circle cx="14.500" cy="11.200" r=".9" fill="#fff" stroke="none" />
            </Svg>
          </IconButton>
          <button type="button" className="mr-[22px] text-[14px]">
            ENG
          </button>
          <div className="mr-[22px] flex items-center gap-[9px]">
            <Svg size={20} box="0 0 20 20" sw={1.4}>
              <path d="M1 8a12.700 12.700 0 0 1 18 0M3.700 11a9 9 0 0 1 12.600 0M6.500 13.600a5 5 0 0 1 7 0" />
              <circle cx="10" cy="16" r="1.400" fill="currentColor" />
            </Svg>
            <Svg size={21} box="0 0 21 21" sw={1.3}>
              <path d="M1 7.500h3.500L9 3.500v14l-4.500-4H1zM12 7.500c1.300 1.800 1.300 4.200 0 6M14.800 5.300c2.500 3.200 2.500 7.200 0 10.400M17.500 3.500c3.400 4.300 3.400 9.700 0 14" />
            </Svg>
            <Svg size={21} box="0 0 21 21" sw={1.5}>
              <rect x="1" y="5" width="16.500" height="11" rx="2.500" />
              <path d="M3.300 7.500h5.500v6H3.300z" fill="currentColor" stroke="none" />
              <path d="M19.500 9v3" strokeWidth="2" />
            </Svg>
          </div>
          <button type="button" className="text-right text-[14px] leading-[20px]">
            11:00
            <br />
            20/5/2567
          </button>
          <IconButton label="การแจ้งเตือน" className="mr-[21px] ml-[11px]">
            <Svg size={18} box="0 0 18 20">
              <path d="M9 .8a6.500 6.500 0 0 1 6.500 6.500v5l2 3.700H.5l2-3.700v-5A6.500 6.500 0 0 1 9 .8zM6 17h6c-.4 1.600-1.400 2.400-3 2.400S6.400 18.600 6 17z" fill="#073f91" stroke="none" />
            </Svg>
          </IconButton>
          <IconButton label="Copilot">
            <PreIcon />
          </IconButton>
        </div>
      </div>
    </footer>
  );
}

export default function App() {
  return (
    <div className={"flex min-h-screen flex-col bg-[#56575c] " + UI}>
      <TitleBar />
      <Toolbar />
      <div className="flex flex-1 pb-[4px] pl-[5px]">
        <DowntimeForm />
        <SideBar />
      </div>
      <TaskBar />
    </div>
  );
}
